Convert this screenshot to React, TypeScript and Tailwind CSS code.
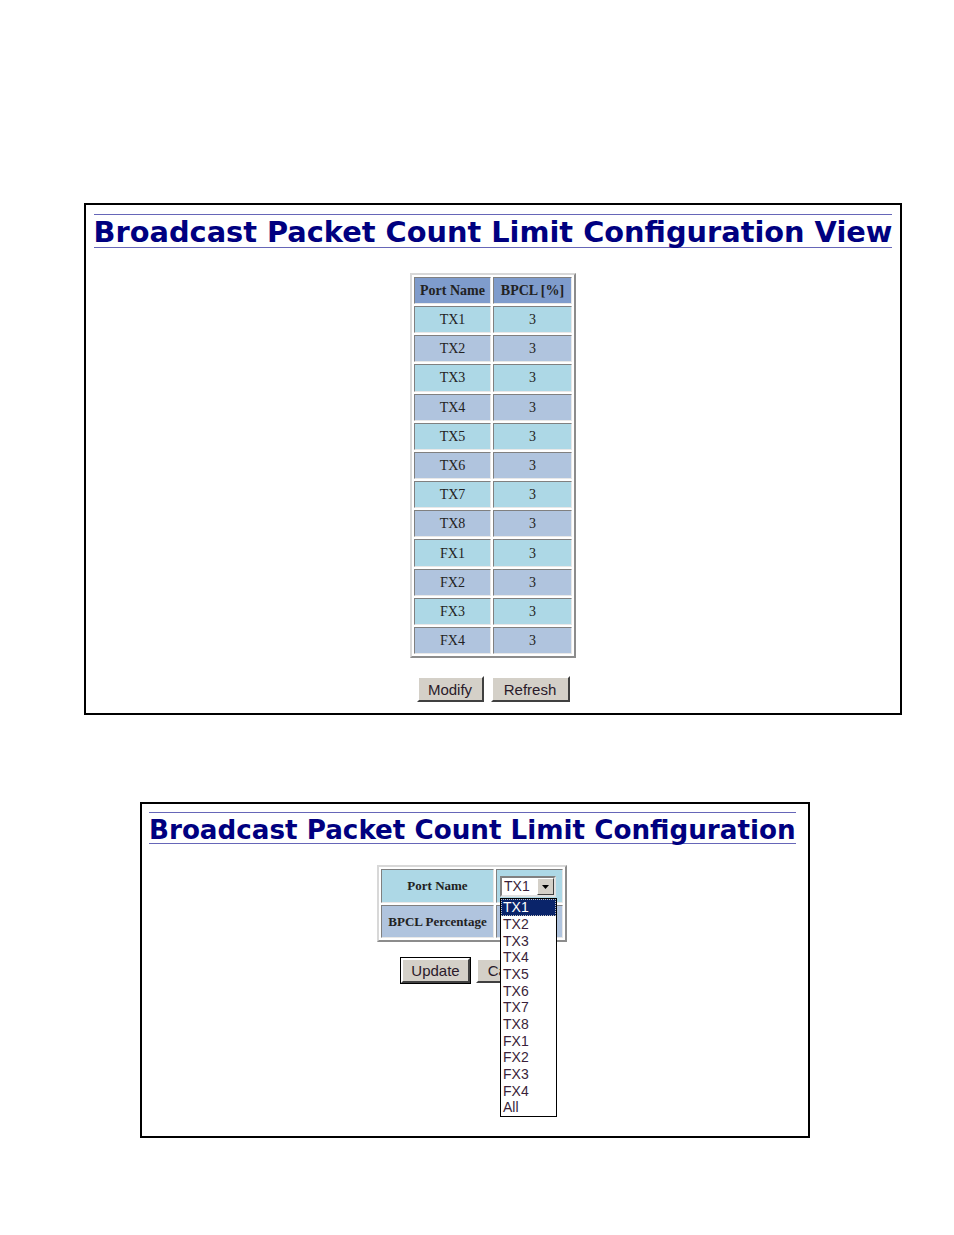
import type { ReactNode } from 'react';

const ports = ['TX1', 'TX2', 'TX3', 'TX4', 'TX5', 'TX6', 'TX7', 'TX8', 'FX1', 'FX2', 'FX3', 'FX4'];
const options = [...ports, 'All'];

const Title = ({ children, size, align }: { children: ReactNode; size: string; align: string }) => (
  <div className={`flex ${align}`}>
    <div
      className={`border-t border-b border-[#6666b8] text-[#000080] font-bold whitespace-nowrap leading-none pt-[3px] ${size}`}
      style={{ fontFamily: '"DejaVu Sans", Verdana, sans-serif' }}
    >
      {children}
    </div>
  </div>
);

const Button = ({ label, strong }: { label: string; strong?: boolean }) => (
  <button
    className={`w-full h-full bg-[#d4d0c8] text-[#2a1a2a] text-[15px] leading-none border-2 border-t-white border-l-white border-r-[#404040] border-b-[#404040] ${
      strong ? 'outline outline-1 outline-black' : ''
    }`}
    style={{ fontFamily: '"Liberation Sans", Arial, sans-serif' }}
  >
    {label}
  </button>
);

const cell = 'border border-t-[#808080] border-l-[#808080] border-r-[#e8e8e8] border-b-[#e8e8e8] text-center';

const App = () => {
  return (
    <div className="bg-white min-h-[1235px] w-[954px] pt-[203px]" style={{ fontFamily: '"Liberation Serif", "Times New Roman", serif' }}>
      {/* view panel */}
      <div className="ml-[84px] w-[818px] h-[512px] border-2 border-black pt-[9px]">
        <Title size="text-[28.8px]" align="justify-center">Broadcast Packet Count Limit Configuration View</Title>

        <div className="flex justify-center mt-[25px]">
          <table className="border-separate border-spacing-[2px] border-[2px] border-t-[#d8d8d8] border-l-[#d8d8d8] border-r-[#8c8c8c] border-b-[#8c8c8c] text-[14px] text-[#222]">
            <thead>
              <tr className="bg-[#7f9ccc] h-[27.2px]">
                <th className={`${cell} w-[77px] font-bold`}>Port Name</th>
                <th className={`${cell} w-[79px] font-bold`}>BPCL [%]</th>
              </tr>
            </thead>
            <tbody>
              {ports.map((p, i) => (
                <tr key={p} className={`h-[27.2px] ${i % 2 === 0 ? 'bg-[#add8e6]' : 'bg-[#b0c4de]'}`}>
                  <td className={cell}>{p}</td>
                  <td className={cell}>3</td>
                </tr>
              ))}
            </tbody>
          </table>
        </div>

        <div className="flex justify-center gap-[7px] mt-[18px]">
          <div className="w-[67px] h-[26px] flex"><Button label="Modify" /></div>
          <div className="w-[79px] h-[26px] flex"><Button label="Refresh" /></div>
        </div>
      </div>

      {/* edit panel */}
      <div className="ml-[140px] mt-[87px] w-[670px] h-[336px] border-2 border-black pt-[8px]">
        <Title size="text-[26.2px] pt-[4px]" align="justify-start pl-[7px]">Broadcast Packet Count Limit Configuration</Title>

        <div className="flex justify-center mt-[21px] pr-[6px]">
          <table className="border-separate border-spacing-[2px] border-[2px] border-t-[#d8d8d8] border-l-[#d8d8d8] border-r-[#8c8c8c] border-b-[#8c8c8c] text-[13px] text-[#222]">
            <tbody>
              <tr className="bg-[#add8e6] h-[34px]">
                <th className={`${cell} w-[113px] font-bold`}>Port Name</th>
                <td className={`${cell} w-[67px] text-left pl-[3px] align-top pt-[6px]`}>
                  <div className="relative w-[56px] h-[21px]" style={{ fontFamily: '"Liberation Sans", Arial, sans-serif' }}>
                    <div className="flex h-full bg-white border-2 border-t-[#808080] border-l-[#808080] border-r-[#e0e0e0] border-b-[#e0e0e0]">
                      <span className="flex-1 text-[14px] leading-[17px] pl-[2px] text-[#3a1f3a]">TX1</span>
                      <span className="w-[17px] bg-[#d4d0c8] border border-t-white border-l-white border-r-[#404040] border-b-[#404040] flex items-center justify-center">
                        <svg width="7" height="4" viewBox="0 0 7 4"><path d="M0 0h7L3.5 4z" fill="#000" /></svg>
                      </span>
                    </div>
                    <ul className="absolute left-0 top-[22px] w-[57px] h-[219px] bg-white border border-black text-[14px] leading-[16.7px] z-10">
                      {options.map((o, i) => (
                        <li
                          key={o}
                          className={`pl-[2px] h-[16.7px] ${
                            i === 0 ? 'bg-[#0a246a] text-white outline-1 outline-dotted outline-[#c0c0c0] -outline-offset-1' : 'text-[#3a1f3a]'
                          }`}
                        >
                          {o}
                        </li>
                      ))}
                    </ul>
                  </div>
                </td>
              </tr>
              <tr className="bg-[#b0c4de] h-[33px]">
                <th className={`${cell} font-bold`}>BPCL Percentage</th>
                <td className={cell}></td>
              </tr>
            </tbody>
          </table>
        </div>

        <div className="flex gap-[6px] mt-[16px] ml-[259px]">
          <div className="w-[69px] h-[25px] flex"><Button label="Update" strong /></div>
          <div className="w-[70px] h-[25px] flex"><Button label="Cancel" /></div>
        </div>
      </div>
    </div>
  );
};

export default App;
